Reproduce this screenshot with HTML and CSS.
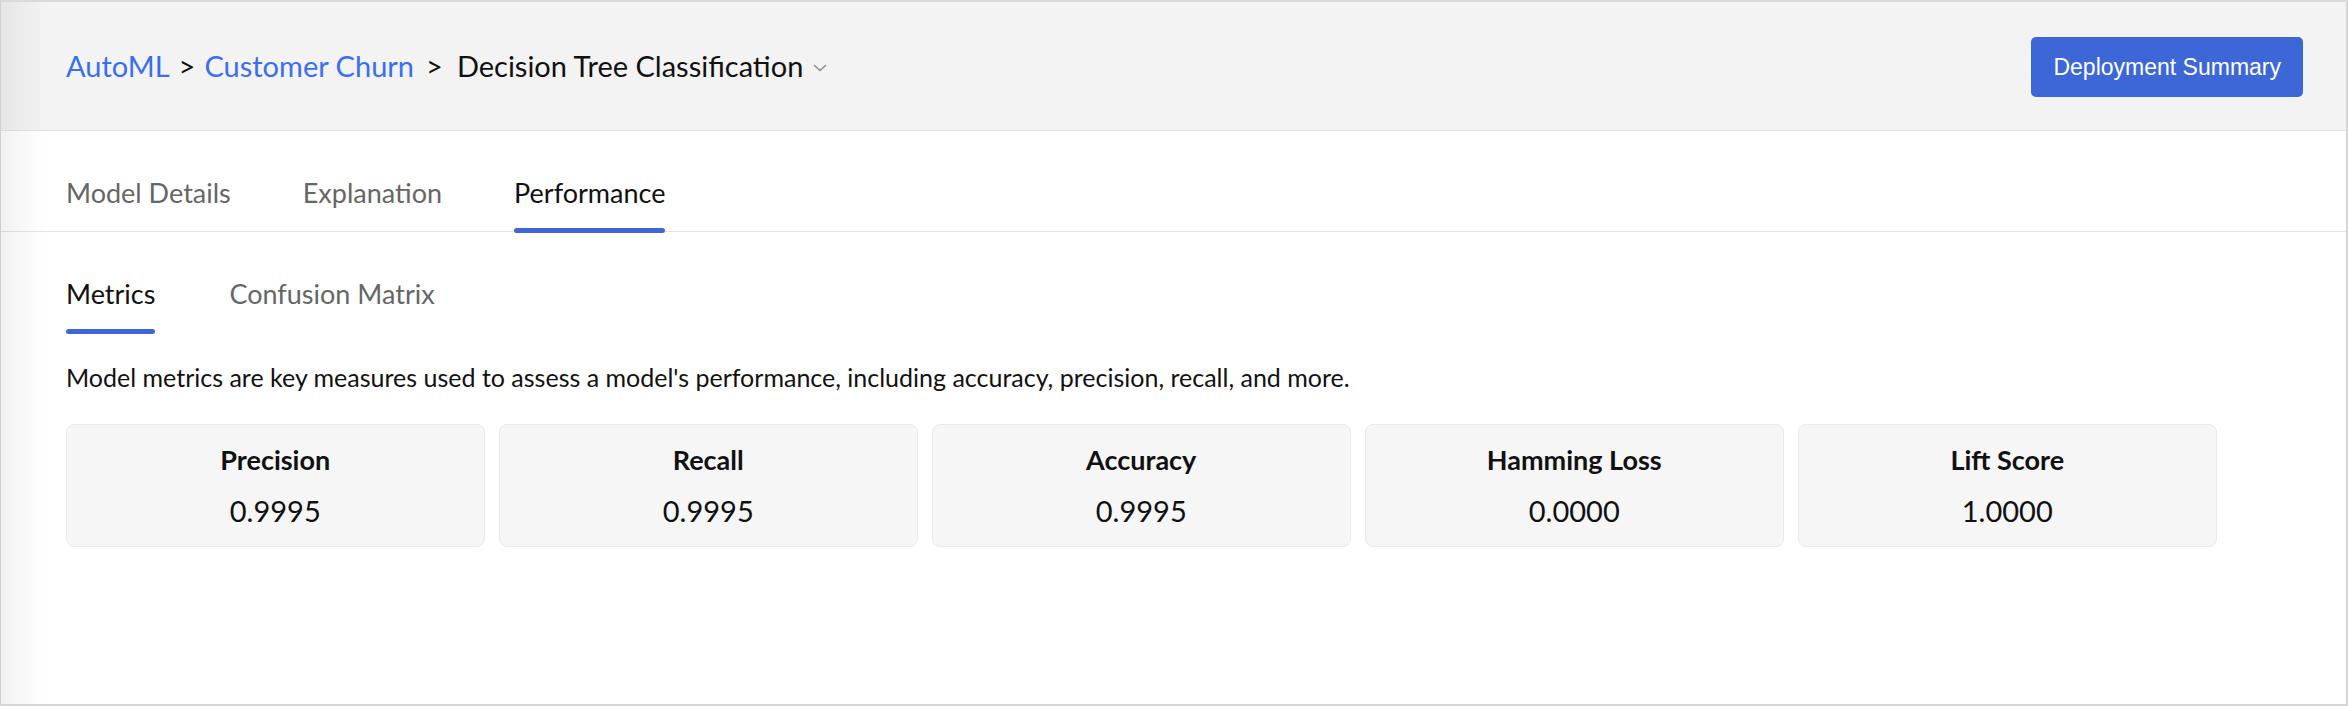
FILE: index.html
```html
<!DOCTYPE html>
<html lang="en">
<head>
<meta charset="utf-8">
<title>Decision Tree Classification - Performance</title>
<link rel="stylesheet" href="styles.css">
</head>
<body>
<div class="frame">
  <header class="header">
    <nav class="crumbs">
      <a class="crumb-link" href="#">AutoML</a>
      <span class="sep">&gt;</span>
      <a class="crumb-link" href="#">Customer Churn</a>
      <span class="sep sep-last">&gt;</span>
      <span class="crumb-current">Decision Tree Classification</span>
      <svg class="chev" width="16" height="10" viewBox="0 0 16 10"><path d="M2.5 2.5 L8 7.5 L13.5 2.5" fill="none" stroke="#8a8a8a" stroke-width="1.5" stroke-linecap="round" stroke-linejoin="round"/></svg>
    </nav>
    <button class="btn-primary">Deployment Summary</button>
  </header>

  <div class="tabs">
    <div class="tab">Model Details</div>
    <div class="tab">Explanation</div>
    <div class="tab tab-active">Performance</div>
  </div>

  <main class="content">
    <div class="subtabs">
      <div class="subtab subtab-active">Metrics</div>
      <div class="subtab">Confusion Matrix</div>
    </div>
    <p class="desc">Model metrics are key measures used to assess a model's performance, including accuracy, precision, recall, and more.</p>
    <div class="cards">
      <div class="card"><div class="card-title">Precision</div><div class="card-value">0.9995</div></div>
      <div class="card"><div class="card-title">Recall</div><div class="card-value">0.9995</div></div>
      <div class="card"><div class="card-title">Accuracy</div><div class="card-value">0.9995</div></div>
      <div class="card"><div class="card-title">Hamming Loss</div><div class="card-value">0.0000</div></div>
      <div class="card"><div class="card-title">Lift Score</div><div class="card-value">1.0000</div></div>
    </div>
  </main>
</div>
</body>
</html>
```

FILE: styles.css
```css
* { box-sizing: border-box; }

html, body {
  margin: 0;
  padding: 0;
  background: #d9d9d9;
}

body {
  font-family: Lato, "Noto Sans", sans-serif;
  color: #111;
}

.frame {
  position: relative;
  width: 2348px;
  height: 706px;
  background: #fff;
  border-top: 2px solid #dadada;
  border-left: 1px solid #cfcfcf;
  border-right: 2px solid #d6d6d6;
  border-bottom: 2px solid #d6d6d6;
  overflow: hidden;
}

.frame::before {
  content: "";
  position: absolute;
  left: 0;
  top: 0;
  bottom: 0;
  width: 44px;
  background: linear-gradient(to right, rgba(0,0,0,0.055), rgba(0,0,0,0));
  pointer-events: none;
  z-index: 2;
}

/* Header */
.header {
  height: 129px;
  background: #f3f3f3;
  border-bottom: 1px solid #e4e4e4;
  display: flex;
  align-items: center;
  justify-content: space-between;
  padding: 0 43px 0 65px;
}

.crumbs {
  display: flex;
  align-items: center;
  font-size: 29px;
  line-height: 36px;
}

.crumb-link {
  color: #3a6ef2;
  text-decoration: none;
}

.sep {
  color: #111;
  margin: 0 9px;
}

.sep-last {
  margin-left: 12px;
  margin-right: 14px;
}

.crumb-current {
  color: #111;
}

.chev {
  margin-left: 9px;
  margin-top: 4px;
}

.btn-primary {
  height: 60px;
  margin-top: 2px;
  padding: 0 22px;
  background: #3d67d6;
  color: #fff;
  border: none;
  border-radius: 5px;
  font-family: "Liberation Sans", Arial, sans-serif;
  font-size: 23px;
  cursor: pointer;
}

/* Tabs */
.tabs {
  display: flex;
  gap: 72px;
  height: 101px;
  border-bottom: 1px solid #e3e3e3;
  padding-left: 65px;
}

.tab {
  position: relative;
  height: 100px;
  padding-top: 44px;
  font-size: 27px;
  line-height: 36px;
  color: #666;
}

.tab-active {
  color: #111;
}

.tab-active::after {
  content: "";
  position: absolute;
  left: 0;
  right: 0;
  bottom: -2px;
  height: 5px;
  border-radius: 3px;
  background: #3d67d6;
}

/* Content */
.content {
  padding-left: 65px;
}

.subtabs {
  display: flex;
  gap: 74px;
}

.subtab {
  position: relative;
  height: 102px;
  padding-top: 44px;
  font-size: 27px;
  line-height: 36px;
  color: #666;
}

.subtab-active {
  color: #111;
}

.subtab-active::after {
  content: "";
  position: absolute;
  left: 0;
  right: 0;
  bottom: 0;
  height: 5px;
  border-radius: 3px;
  background: #3d67d6;
}

.desc {
  margin: 27px 0 31px;
  font-size: 25px;
  line-height: 32px;
  color: #111;
}

.cards {
  display: grid;
  grid-template-columns: repeat(5, 418.5px);
  column-gap: 14.5px;
}

.card {
  background: #f6f6f6;
  border: 1px solid #e9e9e9;
  border-radius: 8px;
  padding: 17px 10px;
  text-align: center;
}

.card-title {
  font-size: 27px;
  line-height: 36px;
  font-weight: 700;
  color: #111;
}

.card-value {
  margin-top: 15px;
  font-size: 29px;
  line-height: 36px;
  color: #111;
}
```
